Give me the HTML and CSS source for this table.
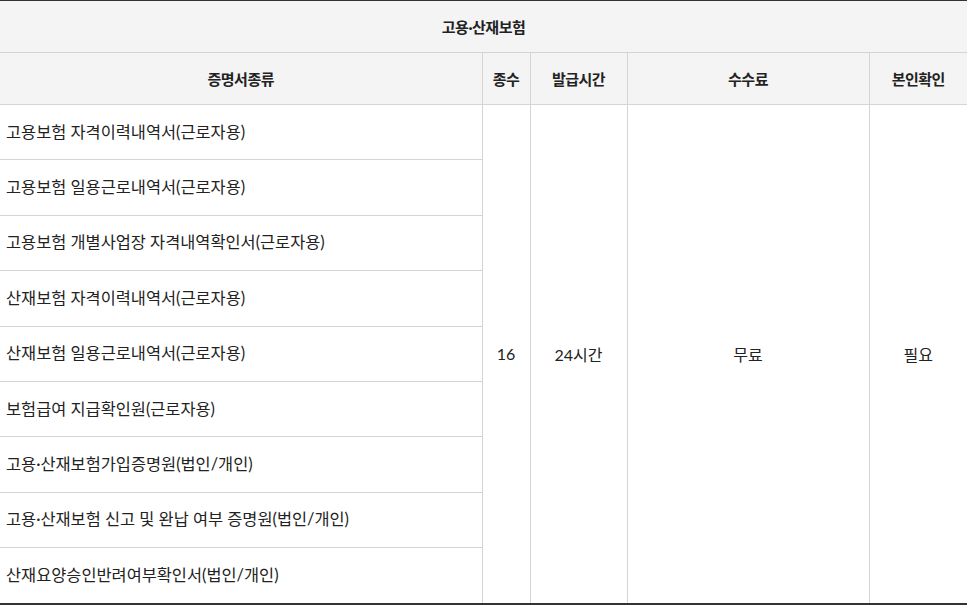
FILE: index.html
```html
<!DOCTYPE html>
<html lang="ko">
<head>
<meta charset="utf-8">
<link rel="stylesheet" href="styles.css">
</head>
<body>
<table class="cert">
  <colgroup>
    <col class="c-name">
    <col class="c-cnt">
    <col class="c-time">
    <col class="c-fee">
    <col class="c-id">
  </colgroup>
  <thead>
    <tr class="h1"><th colspan="5">고용·산재보험</th></tr>
    <tr class="h2">
      <th>증명서종류</th>
      <th>종수</th>
      <th>발급시간</th>
      <th>수수료</th>
      <th>본인확인</th>
    </tr>
  </thead>
  <tbody>
    <tr>
      <td class="name">고용보험 자격이력내역서(근로자용)</td>
      <td rowspan="9">16</td>
      <td rowspan="9">24시간</td>
      <td rowspan="9">무료</td>
      <td rowspan="9">필요</td>
    </tr>
    <tr><td class="name">고용보험 일용근로내역서(근로자용)</td></tr>
    <tr><td class="name">고용보험 개별사업장 자격내역확인서(근로자용)</td></tr>
    <tr><td class="name">산재보험 자격이력내역서(근로자용)</td></tr>
    <tr><td class="name">산재보험 일용근로내역서(근로자용)</td></tr>
    <tr><td class="name">보험급여 지급확인원(근로자용)</td></tr>
    <tr><td class="name">고용·산재보험가입증명원(법인/개인)</td></tr>
    <tr><td class="name">고용·산재보험 신고 및 완납 여부 증명원(법인/개인)</td></tr>
    <tr><td class="name">산재요양승인반려여부확인서(법인/개인)</td></tr>
  </tbody>
</table>
</body>
</html>
```
FILE: styles.css
```css
html, body {
  margin: 0;
  padding: 0;
  background: #fff;
}
body {
  font-family: Lato, "Noto Sans CJK KR", sans-serif;
  color: #222;
}
.cert {
  width: 967px;
  table-layout: fixed;
  border-collapse: collapse;
  border-top: 1px solid #333;
  border-bottom: 2px solid #333;
}
.c-name { width: 482px; }
.c-cnt { width: 48px; }
.c-time { width: 97px; }
.c-fee { width: 242px; }
.c-id { width: 98px; }
.cert th {
  background: #f4f4f4;
  font-size: 15px;
  font-weight: 700;
  color: #222;
  text-align: center;
  padding: 0;
  border: 1px solid #d4d4d4;
  letter-spacing: -0.5px;
}
.cert th:first-child, .cert td:first-child { border-left: none; }
.cert th:last-child, .cert td:last-child { border-right: none; }
.cert tr.h1 th { border-top: none; height: 51px; }
.cert tr.h2 th { height: 51px; }
.cert td {
  font-size: 16px;
  text-align: center;
  padding: 0;
  border: 1px solid #d4d4d4;
  letter-spacing: 0;
}
.cert td.name {
  text-align: left;
  padding: 0 0 3px 6px;
  height: 51.4px;
  font-size: 16.4px;
}
.cert tbody tr:last-child td { border-bottom: none; }
```
